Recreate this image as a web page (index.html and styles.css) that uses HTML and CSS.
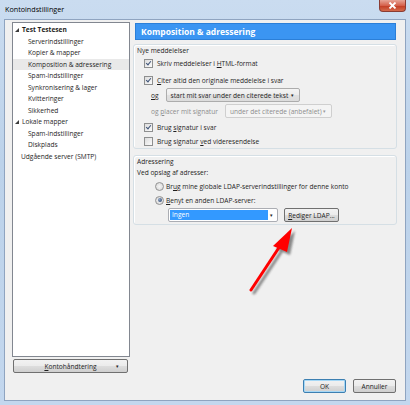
FILE: index.html
```html
<!DOCTYPE html>
<html>
<head>
    <title>Kontoindstillinger</title>
    <link rel="stylesheet" href="styles.css">
</head>
<body>
    <div class="window">
        <div class="titlebar">
            <span class="title">Kontoindstillinger</span>
            <span class="close">
                <svg width="9" height="7" viewBox="0 0 9 7">
                    <path d="M1.5 0.5l6 6M7.5 0.5l-6 6" stroke="#fff" stroke-width="1.8"/>
                </svg>
            </span>
        </div>

        <div class="client">
            <div class="main">
                <!-- kontotrae -->
                <div class="sidebar">
                    <div class="tree">
                        <div class="tree-row root"><span class="twisty"></span><span>Test Testesen</span></div>
                        <div class="tree-row child">Serverindstillinger</div>
                        <div class="tree-row child">Kopier &amp; mapper</div>
                        <div class="tree-row child selected">Komposition &amp; adressering</div>
                        <div class="tree-row child">Spam-indstillinger</div>
                        <div class="tree-row child">Synkronisering &amp; lager</div>
                        <div class="tree-row child">Kvitteringer</div>
                        <div class="tree-row child">Sikkerhed</div>
                        <div class="tree-row root plain"><span class="twisty"></span><span>Lokale mapper</span></div>
                        <div class="tree-row child">Spam-indstillinger</div>
                        <div class="tree-row child">Diskplads</div>
                        <div class="tree-row root plain nochild"><span>Udgående server (SMTP)</span></div>
                    </div>
                    <div class="btn account-btn"><span><u>K</u>ontohåndtering</span><span class="drop">&#9662;</span></div>
                </div>

                <!-- indstillinger -->
                <div class="content">
                    <div class="header">Komposition &amp; adressering</div>

                    <div class="group group-new">
                        <div class="caption">Nye meddelelser</div>
                        <div class="check-row r1"><span class="check on"></span><span>Skriv meddelelser i <u>H</u>TML-format</span></div>
                        <div class="check-row r2"><span class="check on"></span><span><u>C</u>iter altid den originale meddelelse i svar</span></div>
                        <div class="field-row r3">
                            <span><u>o</u>g</span>
                            <span class="select quote-select"><span>start mit svar under den citerede tekst</span><span class="arrow">&#9662;</span></span>
                        </div>
                        <div class="field-row r4 disabled">
                            <span>og <u>p</u>lacer mit signatur</span>
                            <span class="select sig-select"><span>under det citerede (anbefalet)</span><span class="arrow">&#9662;</span></span>
                        </div>
                        <div class="check-row r5"><span class="check on"></span><span>Brug <u>s</u>ignatur i svar</span></div>
                        <div class="check-row r6"><span class="check"></span><span>Brug signatur <u>v</u>ed videresendelse</span></div>
                    </div>

                    <div class="group group-addr">
                        <div class="caption">Adressering</div>
                        <div class="caption">Ved opslag af adresser:</div>
                        <div class="radio-row q1"><span class="radio"></span><span>Br<u>u</u>g mine globale LDAP-serverindstillinger for denne konto</span></div>
                        <div class="radio-row q2"><span class="radio on"></span><span><u>B</u>enyt en anden LDAP-server:</span></div>
                        <div class="ldap-row">
                            <span class="select ldap-select"><span class="hl">Ingen</span><span class="arrow">&#9662;</span></span>
                            <span class="btn ldap-btn"><span><u>R</u>ediger LDAP...</span></span>
                        </div>
                    </div>
                </div>
            </div>

            <div class="footer">
                <span class="btn default">OK</span>
                <span class="btn">Annuller</span>
            </div>
        </div>

        <!-- roed pil -->
        <svg class="pointer" width="410" height="405" viewBox="0 0 410 405">
            <defs>
                <filter id="soft" x="-20%" y="-20%" width="140%" height="140%">
                    <feGaussianBlur stdDeviation="1.2"/>
                </filter>
            </defs>
            <g transform="translate(3 3)" filter="url(#soft)" opacity="0.55">
                <path d="M251 290L282 243" stroke="#333" stroke-width="3" stroke-linecap="round"/>
                <polygon points="292,228 273,246 287,252" fill="#333"/>
            </g>
            <path d="M251 290L282 243" stroke="#f00" stroke-width="3" stroke-linecap="round"/>
            <polygon points="292,228 273,246 287,252" fill="#f00"/>
        </svg>
    </div>
</body>
</html>
```

FILE: styles.css
```css
body {
    margin: 0;
    font-family: "Open Sans", "Liberation Sans", sans-serif;
    font-size: 6.6px;
    color: #1e1e1e;
    background: #fff;
}
u {
    text-decoration: underline;
    text-underline-offset: 1px;
}
.window {
    position: relative;
    width: 410px;
    height: 405px;
    box-sizing: border-box;
    padding: 0 4px 4px 4px;
    display: flex;
    flex-direction: column;
    background: linear-gradient(#cadcf0, #bcd2ea 40%, #c3d7ee);
}
.titlebar {
    height: 19px;
    display: flex;
    justify-content: space-between;
    align-items: flex-start;
}
.title {
    margin-top: 4px;
    margin-left: 1px;
    font-size: 7.2px;
    color: #000;
}
.close {
    width: 27px;
    height: 12px;
    display: flex;
    align-items: center;
    justify-content: center;
    border: 1px solid #8a3c33;
    border-top: none;
    border-radius: 0 0 4px 4px;
    box-sizing: border-box;
    background: linear-gradient(#e7a597, #d5614c 50%, #c13a22 51%, #d46a4c);
}
.client {
    flex: 1;
    display: flex;
    flex-direction: column;
    padding: 2px 8px 7px 7px;
    background: #f0f0f0;
    border: 1px solid #8fa4c0;
}
.main {
    display: flex;
    gap: 3px;
    height: 351px;
}

/* venstre side */
.sidebar {
    width: 118px;
    display: flex;
    flex-direction: column;
    gap: 2px;
}
.tree {
    height: 335px;
    box-sizing: border-box;
    background: #fff;
    border: 1px solid #828790;
    padding-top: 1px;
}
.tree-row {
    height: 11.5px;
    line-height: 11.5px;
    white-space: nowrap;
}
.tree-row.root {
    padding-left: 2px;
    font-weight: bold;
    display: flex;
    align-items: center;
}
.tree-row.plain {
    font-weight: normal;
}
.tree-row.nochild {
    padding-left: 8px;
}
.tree-row.child {
    padding-left: 15px;
}
.tree-row.selected {
    background: #e9e9e9;
}
.twisty {
    width: 0;
    height: 0;
    margin-right: 3px;
    border-left: 4px solid transparent;
    border-bottom: 4px solid #3c3c3c;
}
.btn {
    height: 14px;
    box-sizing: border-box;
    display: flex;
    align-items: center;
    justify-content: center;
    border: 1px solid #707070;
    border-radius: 2px;
    background: linear-gradient(#f2f2f2, #ebebeb 50%, #dddddd 51%, #cfcfcf);
    white-space: nowrap;
}
.account-btn {
    margin: 0 2px 0 1px;
    position: relative;
}
.account-btn .drop {
    position: absolute;
    right: 8px;
    font-size: 5px;
}

/* hoejre side */
.content {
    flex: 1;
    padding-top: 1px;
}
.header {
    height: 17px;
    margin: 0 1px 0 2px;
    padding-left: 5px;
    display: flex;
    align-items: center;
    background: #3b95f2;
    border: 1px solid #2b7fd8;
    box-sizing: border-box;
    color: #fff;
    font-size: 8.5px;
    font-weight: bold;
}
.group {
    border: 1px solid #d5dfe5;
    border-radius: 3px;
    box-shadow: inset 1px 1px 0 #fff;
    padding: 0 3px;
}
.group-new {
    margin-top: 4px;
    height: 105px;
    box-sizing: border-box;
}
.group-addr {
    margin-top: 6px;
    height: 70px;
    box-sizing: border-box;
}
.caption {
    height: 11px;
    line-height: 11px;
}
.check-row,
.radio-row {
    height: 12px;
    display: flex;
    align-items: center;
    white-space: nowrap;
}
.check-row {
    padding-left: 7px;
    gap: 4px;
}
.r1 { margin-top: 1px; }
.r2 { margin-top: 5px; }
.r5 { margin-top: 3px; }
.r6 { margin-top: 2px; }
.check {
    width: 9px;
    height: 9px;
    box-sizing: border-box;
    border: 1px solid #8e8f8f;
    background: linear-gradient(135deg, #dcdcdc, #fbfbfb);
    position: relative;
}
.check.on::after {
    content: "";
    position: absolute;
    left: 2px;
    top: 0px;
    width: 2px;
    height: 4px;
    border: solid #3e5378;
    border-width: 0 1.5px 1.5px 0;
    transform: rotate(40deg);
}
.field-row {
    height: 14px;
    margin-top: 2px;
    padding-left: 14px;
    display: flex;
    align-items: center;
    gap: 7px;
    white-space: nowrap;
}
.field-row.disabled {
    color: #8d8d8d;
}
.select {
    height: 14px;
    box-sizing: border-box;
    display: flex;
    align-items: center;
    justify-content: space-between;
    padding: 0 5px 0 4px;
    border: 1px solid #acacac;
    border-radius: 2px;
    background: linear-gradient(#f4f4f4, #ececec 50%, #e0e0e0 51%, #dcdcdc);
}
.select .arrow {
    font-size: 5px;
    color: #222;
}
.quote-select {
    width: 134px;
}
.sig-select {
    width: 107px;
    background: #f4f4f4;
    border-color: #cfcfcf;
    color: #8d8d8d;
}
.sig-select .arrow {
    color: #9a9a9a;
}
.radio-row {
    padding-left: 18px;
    gap: 2px;
}
.q1 { margin-top: 2px; }
.q2 { margin-top: 2px; }
.radio {
    width: 9px;
    height: 9px;
    box-sizing: border-box;
    border-radius: 50%;
    border: 1px solid #929292;
    background: radial-gradient(circle, #f4f4f4, #d6d6d6);
    position: relative;
}
.radio.on::after {
    content: "";
    position: absolute;
    left: 1.5px;
    top: 1.5px;
    width: 4px;
    height: 4px;
    border-radius: 50%;
    background: radial-gradient(circle at 35% 35%, #8fa6c8, #223a64);
}
.ldap-row {
    margin-top: 2px;
    padding-left: 31px;
    display: flex;
    gap: 6px;
}
.ldap-select {
    width: 110px;
    padding: 1px 4px 1px 1px;
    background: #fff;
    border-color: #abadb3;
}
.ldap-select .hl {
    width: 96px;
    height: 10px;
    line-height: 10px;
    padding-left: 2px;
    background: #3399ff;
    color: #fff;
}
.ldap-btn {
    width: 55px;
}
.footer {
    margin-top: 6px;
    margin-right: 1px;
    display: flex;
    justify-content: flex-end;
    gap: 7px;
}
.footer .btn {
    width: 43px;
}
.footer .btn.default {
    border-color: #3c7fb1;
    box-shadow: inset 0 0 0 1px #a6d8f6;
}
.pointer {
    position: absolute;
    left: 0;
    top: 0;
    pointer-events: none;
}
```
